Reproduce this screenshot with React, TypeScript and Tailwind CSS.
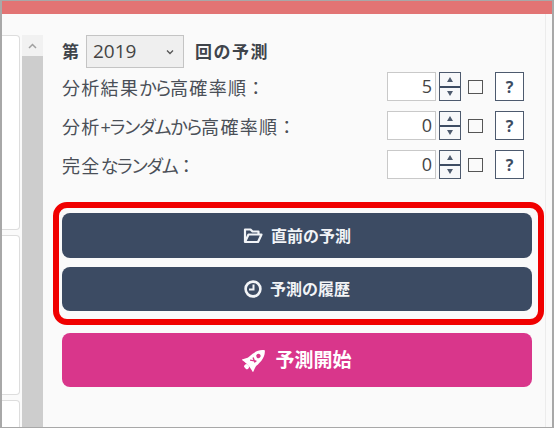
import type { ReactNode } from "react";

const font = "font-['Open_Sans','Noto_Sans_CJK_JP',sans-serif]";

const Kana = ({ children }: { children: ReactNode }) => <span className="tracking-[-1.1px]">{children}</span>;
const Colon = () => <span className="ml-[4px]">：</span>;

const rows = [
  {
    id: "analysis",
    label: (
      <>
        分析結果<Kana>から</Kana>高確率順<Colon />
      </>
    ),
    value: "5",
  },
  {
    id: "mixed",
    label: (
      <>
        分析<Kana>+ランダムから</Kana>高確率順<Colon />
      </>
    ),
    value: "0",
  },
  {
    id: "random",
    label: (
      <>
        完全<Kana>なランダム</Kana>
        <Colon />
      </>
    ),
    value: "0",
  },
];

const CountRow = ({ label, value }: { label: ReactNode; value: string }) => (
  <div className="flex h-[39px] items-center pr-[8px]">
    <span className="flex-1 pt-[3px] text-[18px] tracking-[1.3px] text-[#4a4f57] [font-feature-settings:'palt']">{label}</span>
    <div className="flex h-[29px] w-[49px] items-center justify-end border border-[#c9c9c9] bg-white pr-[3px] text-[18px] text-[#444]">
      {value}
    </div>
    <div className="ml-[3px] flex h-[29px] w-[22px] flex-col border border-[#4d5a6e] bg-[#f7f8fa]">
      <div className="flex flex-1 items-center justify-center">
        <div className="h-0 w-0 border-x-[3px] border-b-[5px] border-x-transparent border-b-[#4d5a6e]" />
      </div>
      <div className="h-[2px] bg-[#3d4c63]" />
      <div className="flex flex-1 items-center justify-center">
        <div className="h-0 w-0 border-x-[3px] border-t-[5px] border-x-transparent border-t-[#4d5a6e]" />
      </div>
    </div>
    <div className="ml-[7px] h-[14px] w-[15px] border-[1.5px] border-[#555]" />
    <div className="ml-[12px] flex h-[29px] w-[29px] items-center justify-center border border-[#4d5a6e] bg-white text-[16px] font-bold text-[#3d4c63]">
      ?
    </div>
  </div>
);

const FolderIcon = () => (
  <svg width="20" height="17" viewBox="0 0 20 17" fill="none" stroke="#f2f4f7" strokeWidth="2.2" strokeLinejoin="round">
    <path d="M2 15 V2.5 H7.5 L9.5 4.5 H15.5 V7" />
    <path d="M2 15 L5.5 7.5 H18.5 L15 15 Z" />
  </svg>
);

const ClockIcon = () => (
  <svg width="18" height="18" viewBox="0 0 18 18" fill="none" stroke="#f2f4f7">
    <circle cx="9" cy="9" r="7.4" strokeWidth="2.6" />
    <path d="M9.5 4.5 V9.5 H5" strokeWidth="2" />
  </svg>
);

const RocketIcon = () => (
  <svg width="24" height="24" viewBox="0 0 24 24">
    <g transform="rotate(48 12 12)">
      <path d="M12 -2.5 C18.5 2 18.5 13 17 20 H7 C5.500 13 5.500 2 12 -2.5 Z" fill="white" />
      <path d="M7 13 L3.500 21 L9 20 Z M17 13 L20.500 21 L15 20 Z" fill="white" />
      <rect x="9.500" y="20" width="5" height="4" rx="1.500" fill="white" />
      <circle cx="12" cy="6" r="2.200" fill="#d9368b" />
      <path d="M9.500 11 L14.500 13 M14.500 11 L9.500 15" stroke="#d9368b" strokeWidth="1.400" />
    </g>
  </svg>
);

const App = () => {
  return (
    <div className={`relative flex h-[428px] w-[554px] flex-col overflow-hidden border-x-2 border-y border-[#a8a8a8] bg-[#fafafa] ${font}`}>
      <div className="h-[13px] shrink-0 bg-[#e27474]" />
      <div className="flex min-h-0 flex-1">
        <div className="flex w-[18px] shrink-0 flex-col gap-[5px] overflow-hidden pt-[21px]">
          <div className="h-[195px] shrink-0 rounded-r-[4px] border border-l-0 border-[#dddddd] bg-white" />
          <div className="h-[160px] shrink-0 rounded-r-[4px] border border-l-0 border-[#dddddd] bg-white" />
          <div className="h-[40px] shrink-0 rounded-tr-[4px] border border-l-0 border-[#dddddd] bg-white" />
        </div>
        <div className="ml-[2px] flex w-[21px] shrink-0 flex-col pt-[21px]">
          <div className="flex h-[21px] items-center justify-center bg-[#f1f1f1]">
            <svg width="9" height="6" viewBox="0 0 9 6" fill="none" stroke="#a0a0a0" strokeWidth="1.5">
              <path d="M1 5 L4.5 1.5 L8 5" />
            </svg>
          </div>
          <div className="flex-1 bg-[#cdcdcd]" />
        </div>
        <div className="mr-[6px] flex min-w-0 flex-1 flex-col border-r border-[#ececec] pl-[19px] pr-[13px] pt-[21px]">
          <div className="flex h-[33px] items-center text-[17px] font-bold text-[#3f444b]">
            <span>第</span>
            <div className="ml-[7px] flex h-[33px] w-[98px] items-center justify-between border border-[#c4c4c4] bg-[#efefef] pl-[6px] pr-[9px] text-[19px] font-normal text-[#444]">
              <span>2019</span>
              <svg width="8" height="6" viewBox="0 0 8 6" fill="none" stroke="#555" strokeWidth="1.3">
                <path d="M1 1.5 L4 4.5 L7 1.5" />
              </svg>
            </div>
            <span className="ml-[11px] tracking-[1.5px]">回の予測</span>
          </div>
          <div className="-mt-px flex flex-col">
            {rows.map((row) => (
              <CountRow key={row.id} label={row.label} value={row.value} />
            ))}
          </div>
          <div className="mt-[29px] flex flex-col gap-[9px]">
            <button className="flex h-[45px] items-center justify-center gap-[8px] rounded-[8px] bg-[#3c4b63] text-[16px] font-bold text-[#f2f4f7]">
              <FolderIcon />
              直前の予測
            </button>
            <button className="flex h-[44px] items-center justify-center gap-[8px] rounded-[8px] bg-[#3c4b63] text-[16px] font-bold text-[#f2f4f7]">
              <ClockIcon />
              予測の履歴
            </button>
          </div>
          <button className="mt-[22px] flex h-[54px] shrink-0 items-center justify-center gap-[9px] rounded-[8px] bg-[#d9368b] text-[19px] font-bold text-white">
            <RocketIcon />
            予測開始
          </button>
        </div>
      </div>
      <div className="absolute left-[51px] top-[201px] h-[123px] w-[491px] rounded-[14px] border-[6px] border-[#f00000]" />
    </div>
  );
};

export default App;
